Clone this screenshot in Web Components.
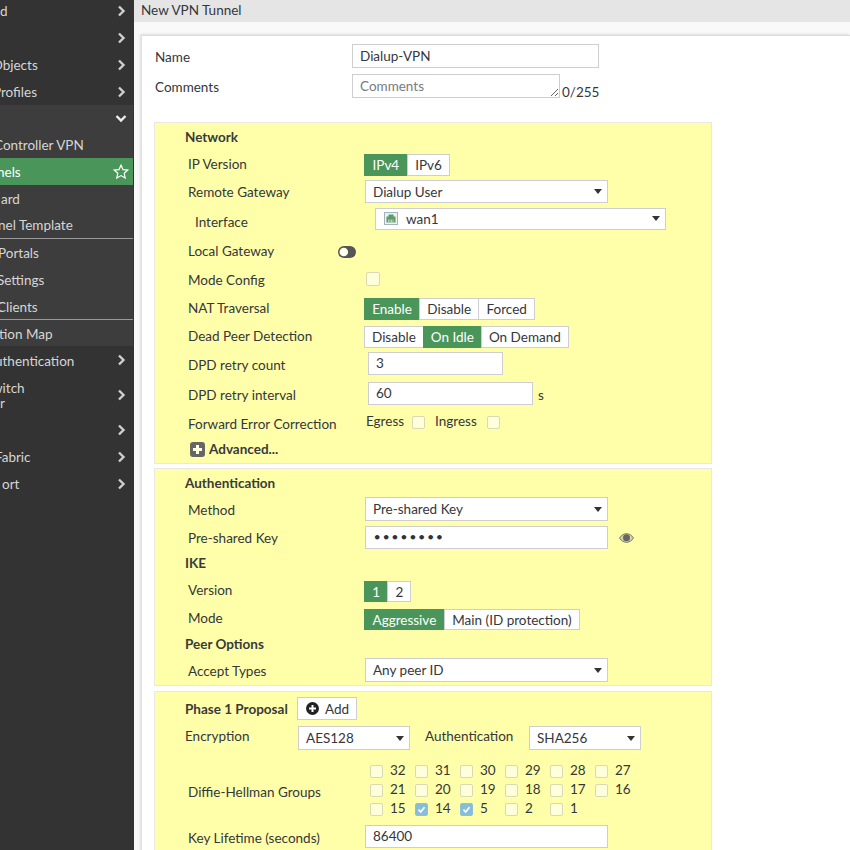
<!DOCTYPE html>
<html>
<head>
<meta charset="utf-8">
<title>New VPN Tunnel</title>
<style>
  html, body { margin: 0; height: 100%; overflow: hidden; }
  body { font: 13.5px/18px Lato, "Liberation Sans", sans-serif; color: #34373b; background: #f9f9f9; }
</style>
</head>
<body>
<vpn-page>
  <side-nav slot="nav">
    <nav-item h="27" mt="-3" text="d" x="0" arrow="right"></nav-item>
    <nav-item h="27" arrow="right"></nav-item>
    <nav-item h="27" text="Objects" x="-8" arrow="right"></nav-item>
    <nav-item h="27" text="Profiles" x="-7" arrow="right"></nav-item>
    <nav-item h="27" sub arrow="down"></nav-item>
    <nav-item h="26" dy="0" sub text="Controller VPN" x="-6"></nav-item>
    <nav-item h="27" sub active text="nels" x="-3"></nav-item>
    <nav-item h="27" sub text="ard" x="1"></nav-item>
    <nav-item h="27" dy="0" sub line text="nel Template" x="-2"></nav-item>
    <nav-item h="27" sub text="Portals" x="-2"></nav-item>
    <nav-item h="27" sub text="Settings" x="-3"></nav-item>
    <nav-item h="27" sub line text="Clients" x="-3"></nav-item>
    <nav-item h="26" sub text="tion Map" x="-1"></nav-item>
    <nav-item h="27" dy="2" text="uthentication" x="-5" arrow="right"></nav-item>
    <nav-item h="43" text="witch" x="-8" text2="r" arrow="right"></nav-item>
    <nav-item h="27" arrow="right"></nav-item>
    <nav-item h="27" text="Fabric" x="-5" arrow="right"></nav-item>
    <nav-item h="27" text="ort" x="2" arrow="right"></nav-item>
  </side-nav>

  <span slot="title">New VPN Tunnel</span>

  <vpn-card>
    <top-row style="--h:24px;--mt:8px;--ly:1px" label="Name">
      <text-box style="--w:247px;--bh:24px;--lh:22px" value="Dialup-VPN"></text-box>
    </top-row>
    <top-row style="--h:24px;--mt:6px;--ly:1px" label="Comments">
      <comment-box></comment-box>
    </top-row>

    <form-panel style="--gap:24px;--pb:6px">
      <form-title style="--h:28px">Network</form-title>
      <form-row style="--h:28px;--ly:-1px" label="IP Version"><seg-group items="IPv4,IPv6" active="0" pad="7.5"></seg-group></form-row>
      <form-row style="--h:25px" label="Remote Gateway"><select-box style="--w:243px" value="Dialup User"></select-box></form-row>
      <form-row style="--h:29px;--ly:3px;--lx:7px" label="Interface">
        <select-box style="--w:291px;--bh:22px;--ml:10px" value="wan1" icon></select-box>
      </form-row>
      <form-row style="--h:38px;--ly:-1px" label="Local Gateway"><toggle-icon style="--ml:-27px"></toggle-icon></form-row>
      <form-row style="--h:16px;--ly:1px" label="Mode Config"><check-box style="--ml:1px;--s:14px"></check-box></form-row>
      <form-row style="--h:22px;--mt:11px;--ly:-1px" label="NAT Traversal"><seg-group items="Enable,Disable,Forced" active="0" pad="7.2"></seg-group></form-row>
      <form-row style="--h:22px;--mt:6px;--ly:-1px" label="Dead Peer Detection"><seg-group items="Disable,On Idle,On Demand" active="1" pad="7"></seg-group></form-row>
      <form-row style="--h:23px;--mt:4px;--ly:.5px" label="DPD retry count"><text-box style="--w:135px;--ml:3px;--bh:23px" value="3"></text-box></form-row>
      <form-row style="--h:23px;--mt:7px;--ly:.5px" label="DPD retry interval">
        <text-box style="--w:165px;--ml:3px;--bh:23px" value="60"></text-box><span style="margin-left:5px;padding-top:3px">s</span>
      </form-row>
      <form-row style="--h:22px;--mt:5px;--ly:3px" label="Forward Error Correction">
        <span style="margin-left:1px">Egress</span><check-box style="--ml:8px;--s:13px;--mtb:2px"></check-box>
        <span style="margin-left:10px">Ingress</span><check-box style="--ml:10px;--s:13px;--mtb:2px"></check-box>
      </form-row>
      <form-more style="--mt:9px">Advanced...</form-more>
    </form-panel>

    <form-panel style="--gap:4px;--pb:3px">
      <form-title style="--h:28px">Authentication</form-title>
      <form-row style="--h:24px;--ly:1px" label="Method"><select-box style="--w:243px;--bh:24px" value="Pre-shared Key"></select-box></form-row>
      <form-row style="--h:23px;--mt:5px" label="Pre-shared Key">
        <text-box style="--w:243px;--bh:23px" value="&#8226;&#8226;&#8226;&#8226;&#8226;&#8226;&#8226;&#8226;" dots></text-box>
        <eye-icon></eye-icon>
      </form-row>
      <form-title style="--h:28px">IKE</form-title>
      <form-row style="--h:21px;--mt:4px;--ly:-2.5px;--sh:21px" label="Version"><seg-group items="1,2" active="0" pad="7.2"></seg-group></form-row>
      <form-row style="--h:21px;--mt:7px;--ly:-2.5px;--sh:21px" label="Mode"><seg-group items="Aggressive,Main (ID protection)" active="0" pad="7.5"></seg-group></form-row>
      <form-title style="--h:28px">Peer Options</form-title>
      <form-row style="--h:24px;--ly:1px" label="Accept Types"><select-box style="--w:243px;--bh:24px" value="Any peer ID"></select-box></form-row>
    </form-panel>

    <form-panel style="--gap:5px;--pb:2px">
      <proposal-head></proposal-head>
      <cipher-row></cipher-row>
      <dh-groups></dh-groups>
      <form-row style="--h:23px;--mt:6px;--ly:.5px" label="Key Lifetime (seconds)"><text-box style="--w:243px;--bh:23px" value="86400"></text-box></form-row>
    </form-panel>
  </vpn-card>
</vpn-page>

<script>
const GREEN = '#4a965a';
const BORDER = '#cdcdd2';

customElements.define('vpn-page', class extends HTMLElement {
  constructor() {
    super();
    this.attachShadow({ mode: 'open' }).innerHTML = `
    <style>
      :host { display: flex; height: 850px; overflow: hidden; }
      main { flex: 1; min-width: 0; display: flex; flex-direction: column; }
      header { height: 22px; line-height: 20px; background: #e5e5e5; padding-left: 7px; }
      .body { flex: 1; padding: 13px 0 0 7px; min-height: 0; overflow: hidden; }
    </style>
    <slot name="nav"></slot>
    <main>
      <header><slot name="title"></slot></header>
      <div class="body"><slot></slot></div>
    </main>`;
  }
});

customElements.define('side-nav', class extends HTMLElement {
  constructor() {
    super();
    this.attachShadow({ mode: 'open' }).innerHTML = `
    <style>
      :host { display: block; width: 134px; flex: none; height: 850px; overflow: hidden; background: #333; }
    </style>
    <slot></slot>`;
  }
});

customElements.define('nav-item', class extends HTMLElement {
  constructor() {
    super();
    this.attachShadow({ mode: 'open' });
  }
  connectedCallback() {
    const text = this.getAttribute('text') || '';
    const text2 = this.getAttribute('text2');
    const arrow = this.getAttribute('arrow');
    const sub = this.hasAttribute('sub');
    const active = this.hasAttribute('active');
    const line = this.hasAttribute('line');
    const dy = this.getAttribute('dy') || 1;
    let icon = '';
    if (arrow === 'right') icon = `<svg width="9" height="12" viewBox="0 0 9 12"><path d="M2 1.5 6.5 6 2 10.5" fill="none" stroke="#cfcfcf" stroke-width="2.4"/></svg>`;
    if (arrow === 'down') icon = `<svg width="12" height="9" viewBox="0 0 12 9" style="margin-right:-1px"><path d="M1.5 2 6 6.5 10.5 2" fill="none" stroke="#eee" stroke-width="2.4"/></svg>`;
    if (active) icon = `<svg width="16" height="15" viewBox="0 0 16 15"><path d="M8 1.2 10 5.6 14.8 6.1 11.2 9.3 12.2 14 8 11.6 3.8 14 4.8 9.3 1.2 6.1 6 5.6Z" fill="none" stroke="#fff" stroke-width="1.2"/></svg>`;
    const bg = active ? GREEN : sub ? '#3d3d3d' : '#333';
    this.shadowRoot.innerHTML = `
    <style>
      :host { display: block; }
      .row {
        box-sizing: border-box; height: ${this.getAttribute('h')}px;
        margin-top: ${this.getAttribute('mt') || 0}px;
        margin-right: 1px;
        display: flex; align-items: center; justify-content: space-between;
        background: ${bg}; color: ${active ? '#fff' : '#d6d6d6'};
        padding-right: ${active ? 4 : 7}px;
        ${line ? 'border-bottom: 1px solid #999;' : ''}
        white-space: nowrap; line-height: 15px;
      }
      .t { transform: translateY(${dy}px); }
      .t span { display: block; }
      .a { margin-left: ${this.getAttribute('x') || 0}px; }
      svg { flex: none; }
    </style>
    <div class="row"><div class="t"><span class="a">${text}</span>${text2 ? `<span>${text2}</span>` : ''}</div>${icon}</div>`;
  }
});

customElements.define('vpn-card', class extends HTMLElement {
  constructor() {
    super();
    this.attachShadow({ mode: 'open' }).innerHTML = `
    <style>
      :host { display: block; background: #fff; border-top: 1px solid #ddd; border-left: 1px solid #e2e2e2; padding-left: 12px; min-height: 830px; box-shadow: -1px -1px 2px #ddd; }
      .w { width: 558px; }
    </style>
    <div class="w"><slot></slot></div>`;
  }
});

customElements.define('top-row', class extends HTMLElement {
  constructor() {
    super();
    this.attachShadow({ mode: 'open' }).innerHTML = `
    <style>
      :host { display: flex; align-items: center; height: var(--h); margin-top: var(--mt, 0); }
      label { width: 198px; flex: none; padding-left: 1px; box-sizing: border-box; transform: translateY(var(--ly, 0)); }
    </style>
    <label></label><slot></slot>`;
  }
  connectedCallback() {
    this.shadowRoot.querySelector('label').textContent = this.getAttribute('label');
  }
});

customElements.define('comment-box', class extends HTMLElement {
  constructor() {
    super();
    this.attachShadow({ mode: 'open' }).innerHTML = `
    <style>
      :host { display: flex; align-items: flex-end; }
      .area { box-sizing: border-box; width: 208px; height: 24px; border: 1px solid ${BORDER}; padding: 2px 7px; color: #777b80; line-height: 18px; display: flex; justify-content: space-between; }
      svg { align-self: flex-end; margin: 0 -7px -2px 0; }
      .n { margin-left: 2px; margin-bottom: -3px; }
    </style>
    <div class="area"><span>Comments</span>
      <svg width="9" height="9" viewBox="0 0 9 9"><path d="M1 8 8 1M5 8 8 5" stroke="#666" fill="none"/></svg>
    </div><span class="n">0/255</span>`;
  }
});

customElements.define('form-panel', class extends HTMLElement {
  constructor() {
    super();
    this.attachShadow({ mode: 'open' }).innerHTML = `
    <style>
      :host { display: block; background: #ffffa9; border: 1px solid #e8e8e4; margin-top: var(--gap, 0); padding-bottom: var(--pb, 0); }
    </style>
    <slot></slot>`;
  }
});

customElements.define('form-title', class extends HTMLElement {
  constructor() {
    super();
    this.attachShadow({ mode: 'open' }).innerHTML = `
    <style>
      :host { display: flex; align-items: center; height: var(--h); padding-left: 30px; font-weight: 700; color: #3a3a3a; }
    </style>
    <slot></slot>`;
  }
});

customElements.define('form-row', class extends HTMLElement {
  constructor() {
    super();
    this.attachShadow({ mode: 'open' }).innerHTML = `
    <style>
      :host { display: flex; align-items: center; height: var(--h); margin-top: var(--mt, 0); }
      label { width: 177px; margin-left: 33px; padding-left: var(--lx, 0); flex: none; box-sizing: border-box; transform: translateY(var(--ly, 0)); white-space: nowrap; }
    </style>
    <label></label><slot></slot>`;
  }
  connectedCallback() {
    this.shadowRoot.querySelector('label').textContent = this.getAttribute('label');
  }
});

customElements.define('seg-group', class extends HTMLElement {
  constructor() {
    super();
    this.attachShadow({ mode: 'open' });
  }
  connectedCallback() {
    const active = +this.getAttribute('active');
    const btns = this.getAttribute('items').split(',').map((t, i) =>
      `<span class="${i === active ? 'on' : ''}">${t}</span>`).join('');
    this.shadowRoot.innerHTML = `
    <style>
      :host { display: flex; }
      span { box-sizing: border-box; height: var(--sh, 22px); line-height: 20.5px; padding: 0 ${this.getAttribute('pad')}px; background: #fff; border: 1px solid ${BORDER}; margin-left: -1px; white-space: nowrap; }
      span:first-child { margin-left: 0; }
      .on { background: ${GREEN}; border-color: ${GREEN}; color: #fff; }
    </style>${btns}`;
  }
});

customElements.define('text-box', class extends HTMLElement {
  constructor() {
    super();
    this.attachShadow({ mode: 'open' });
  }
  connectedCallback() {
    const dots = this.hasAttribute('dots');
    this.shadowRoot.innerHTML = `
    <style>
      :host { display: block; box-sizing: border-box; width: var(--w); height: var(--bh, 24px); margin-left: var(--ml, 0); border: 1px solid ${BORDER}; background: #fff; padding-left: 7px; line-height: var(--lh, 20px); white-space: nowrap; }
      ${dots ? 'span { font-size: 13px; letter-spacing: .6px; color: #2f3236; font-family: "DejaVu Sans", sans-serif; font-weight: 700; }' : ''}
    </style>
    <span>${this.getAttribute('value')}</span>`;
  }
});

customElements.define('select-box', class extends HTMLElement {
  constructor() {
    super();
    this.attachShadow({ mode: 'open' });
  }
  connectedCallback() {
    const port = this.hasAttribute('icon') ? `<svg width="14" height="13" viewBox="0 0 14 13" style="margin:0 8px 0 1px">
      <rect x=".5" y=".5" width="13" height="12" fill="#f1f1ea" stroke="#9fb4bd"/>
      <path d="M2.5 10.5V4.5H4.5V2.5H9.5V4.5H11.5V10.5Z" fill="#5f9a6f"/>
      <path d="M4.5 7.5V10.5M6 7.5V10.5M7.5 7.5V10.5M9 7.5V10.5" stroke="#dfe9e1" stroke-width=".7"/>
    </svg>` : '';
    this.shadowRoot.innerHTML = `
    <style>
      :host { display: flex; align-items: center; box-sizing: border-box; width: var(--w); height: var(--bh, 23px); margin-left: var(--ml, 0); border: 1px solid ${BORDER}; background: #fff; padding: 0 7px; white-space: nowrap; }
      span { flex: 1; }
      i { width: 0; height: 0; border: 4.5px solid transparent; border-top: 5px solid #333; border-bottom: 0; margin-right: -2px; }
    </style>
    ${port}<span>${this.getAttribute('value')}</span><i></i>`;
  }
});

customElements.define('check-box', class extends HTMLElement {
  constructor() {
    super();
    this.attachShadow({ mode: 'open' });
  }
  connectedCallback() {
    const on = this.hasAttribute('checked');
    this.shadowRoot.innerHTML = `
    <style>
      :host { display: block; box-sizing: border-box; flex: none; width: var(--s, 13px); height: var(--s, 13px); margin-left: var(--ml, 0); margin-top: var(--mtb, 0); border: 1px solid ${on ? '#8fc0db' : '#d9d9b4'}; border-radius: 2px; background: ${on ? '#86bddb' : '#ffffdc'}; }
      svg { display: block; }
    </style>
    ${on ? '<svg width="11" height="11" viewBox="0 0 11 11"><path d="M2.5 5.7 4.7 8 8.5 3.3" fill="none" stroke="#fff" stroke-width="1.8"/></svg>' : ''}`;
  }
});

customElements.define('toggle-icon', class extends HTMLElement {
  constructor() {
    super();
    this.attachShadow({ mode: 'open' }).innerHTML = `
    <style>:host { display: block; margin-left: var(--ml, 0); height: 12px; } svg { display: block; }</style>
    <svg width="18" height="12" viewBox="0 0 18 12">
      <rect width="18" height="12" rx="6" fill="#555"/>
      <circle cx="5.8" cy="6" r="4.3" fill="#fffff0"/>
    </svg>`;
  }
});

customElements.define('eye-icon', class extends HTMLElement {
  constructor() {
    super();
    this.attachShadow({ mode: 'open' }).innerHTML = `
    <style>:host { display: block; margin-left: 11px; height: 10px; } svg { display: block; }</style>
    <svg width="15" height="10" viewBox="0 0 15 10">
      <path d="M.5 5C2.5 2 4.8.7 7.5.7S12.5 2 14.5 5C12.5 8 10.2 9.3 7.5 9.3S2.5 8 .5 5Z" fill="#d6d6a8" stroke="#77776c"/>
      <circle cx="7.5" cy="4.8" r="3.5" fill="#66665e"/>
    </svg>`;
  }
});

customElements.define('form-more', class extends HTMLElement {
  constructor() {
    super();
    this.attachShadow({ mode: 'open' }).innerHTML = `
    <style>
      :host { display: flex; align-items: center; height: 16px; margin-top: var(--mt, 0); padding-left: 35px; color: #3a3a3a; font-weight: 700; }
      svg { margin-right: 4px; }
    </style>
    <svg width="15" height="15" viewBox="0 0 15 15">
      <rect width="15" height="15" rx="3" fill="#666"/>
      <path d="M7.5 3V12M3 7.5H12" stroke="#ffffe0" stroke-width="3"/>
    </svg><slot></slot>`;
  }
});

customElements.define('proposal-head', class extends HTMLElement {
  constructor() {
    super();
    this.attachShadow({ mode: 'open' }).innerHTML = `
    <style>
      :host { display: flex; align-items: center; height: 23px; margin-top: 5px; padding-left: 30px; }
      b { width: 112px; flex: none; font-weight: 700; color: #3a3a3a; white-space: nowrap; }
      .add { box-sizing: border-box; width: 60px; height: 23px; background: #fff; border: 1px solid ${BORDER}; display: flex; align-items: center; padding-left: 8px; gap: 6px; }
    </style>
    <b>Phase 1 Proposal</b>
    <span class="add">
      <svg width="13" height="13" viewBox="0 0 13 13"><circle cx="6.5" cy="6.5" r="6.5" fill="#222"/><path d="M6.5 3V10M3 6.5H10" stroke="#fff" stroke-width="2"/></svg>
      <span>Add</span>
    </span>`;
  }
});

customElements.define('cipher-row', class extends HTMLElement {
  constructor() {
    super();
    this.attachShadow({ mode: 'open' }).innerHTML = `
    <style>
      :host { display: flex; align-items: center; height: 24px; margin-top: 6px; padding-left: 30px; --bh: 24px; --w: 112px; }
      span { flex: none; transform: translateY(-2px); white-space: nowrap; }
      .enc { width: 113px; }
      .auth { margin-left: 15px; width: 104px; }
    </style>
    <span class="enc">Encryption</span><select-box value="AES128"></select-box>
    <span class="auth">Authentication</span><select-box value="SHA256"></select-box>`;
  }
});

customElements.define('dh-groups', class extends HTMLElement {
  constructor() {
    super();
    const rows = [[32,31,30,29,28,27],[21,20,19,18,17,16],[15,14,5,2,1]];
    const cells = rows.flat().map(n => `
      <div class="c"><check-box style="--s:13px" ${n === 14 || n === 5 ? 'checked' : ''}></check-box><span>${n}</span></div>`).join('');
    this.attachShadow({ mode: 'open' }).innerHTML = `
    <style>
      :host { display: flex; align-items: center; margin-top: 12px; padding-left: 33px; }
      label { width: 182px; flex: none; white-space: nowrap; transform: translateY(.5px); }
      .g { display: grid; grid-template-columns: repeat(6, 45px); grid-auto-rows: 19px; }
      .c { display: flex; align-items: center; gap: 7px; line-height: 14px; }
      .c span { transform: translateY(-2px); }
    </style>
    <label>Diffie-Hellman Groups</label><div class="g">${cells}</div>`;
  }
});
</script>
</body>
</html>
